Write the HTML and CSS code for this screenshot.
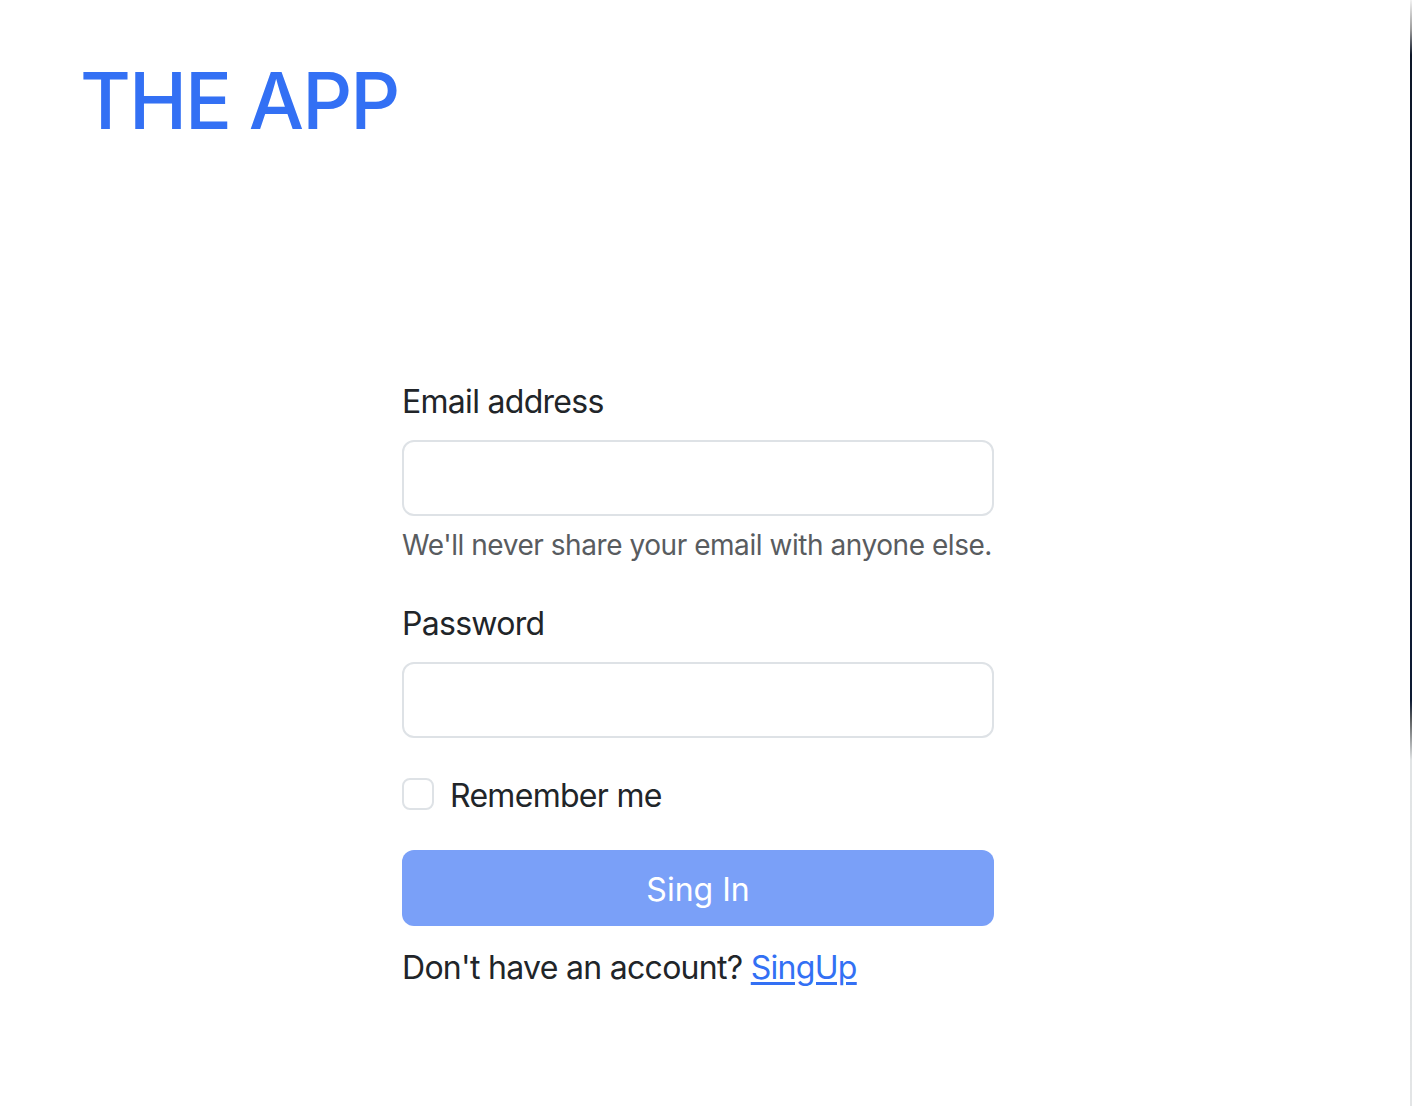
FILE: index.html
```html
<!DOCTYPE html>
<html lang="en">
<head>
<meta charset="utf-8">
<title>THE APP</title>
<link rel="stylesheet" href="styles.css">
</head>
<body>
<div class="page">
  <header class="header">
    <h1 class="brand">THE APP</h1>
  </header>
  <main class="main">
    <form class="login">
      <div class="field">
        <label class="label" for="email">Email address</label>
        <input class="input" id="email" type="email">
        <div class="help">We'll never share your email with anyone else.</div>
      </div>
      <div class="field">
        <label class="label" for="pw">Password</label>
        <input class="input" id="pw" type="password">
      </div>
      <div class="check">
        <input class="check-box" id="rem" type="checkbox">
        <label class="check-label" for="rem">Remember me</label>
      </div>
      <button class="btn" type="button" disabled>Sing In</button>
      <p class="signup">Don't have an account? <a href="#" class="link">SingUp</a></p>
    </form>
  </main>
</div>
<div class="edge"></div>
</body>
</html>
```

FILE: styles.css
```css
* { box-sizing: border-box; }
html, body { height: 100%; }
body {
  margin: 0;
  display: flex;
  background: #fff;
  font-family: Inter, "Noto Sans", sans-serif;
  color: #212529;
  font-size: 32px;
  line-height: 1.5;
  letter-spacing: -0.022em;
}
.page {
  flex: 1;
  display: flex;
  flex-direction: column;
}
.edge {
  width: 2px;
  flex: none;
  background: linear-gradient(to bottom, #f2f2f2 0, #9a9a9a 30px, #0d1628 55px, #0d1a33 700px, #5b5e60 720px, #e1e4e5 760px, #e3e5e6 100%);
}
.header {
  padding: 53px 0 0 80px;
}
.brand {
  margin: 0;
  font-size: 78px;
  font-weight: 500;
  line-height: 96px;
  color: #3370f4;
  letter-spacing: -2px;
}
.main {
  padding: 227px 0 0 402px;
}
.login {
  width: 592px;
}
.field {
  margin-bottom: 32px;
}
.label {
  display: block;
  padding-top: 2px;
  margin-bottom: 14px;
}
.input {
  display: block;
  width: 100%;
  height: 76px;
  padding: 12px 24px;
  font: inherit;
  border: 2px solid #dee2e6;
  border-radius: 12px;
  background: #fff;
  outline: none;
}
.help {
  margin-top: 8px;
  font-size: 28px;
  line-height: 1.5;
  color: #595c5f;
  letter-spacing: -0.016em;
  white-space: nowrap;
}
.check {
  display: flex;
  align-items: flex-start;
  margin-bottom: 32px;
  height: 48px;
}
.check-box {
  appearance: none;
  width: 32px;
  height: 32px;
  margin: 8px 16px 0 0;
  border: 2px solid #dee2e6;
  border-radius: 8px;
  background: #fff;
  flex: none;
}
.check-label {
  padding-top: 2px;
}
.btn {
  display: block;
  width: 100%;
  height: 76px;
  border: 0;
  border-radius: 12px;
  background: #7aa0f8;
  color: #fff;
  font: inherit;
  padding: 4px 0 0;
}
.signup {
  margin: 18px 0 0;
}
.link {
  color: #3370f4;
  text-decoration: underline;
  text-underline-offset: 3px;
}
```
